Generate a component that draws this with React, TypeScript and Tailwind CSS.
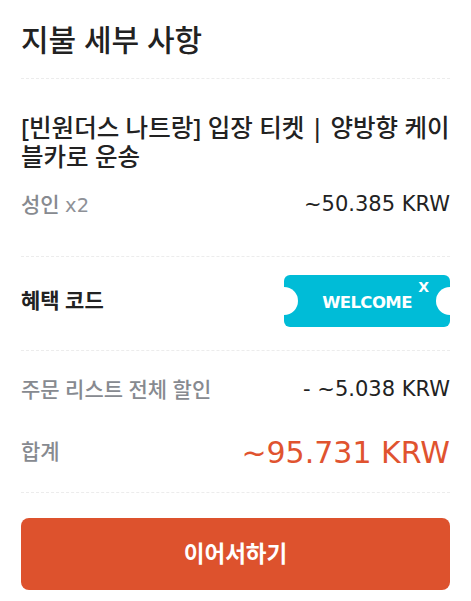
export default function App() {
  const font = { fontFamily: '"Noto Sans", "Noto Sans CJK KR", sans-serif' };
  const num = { fontFamily: '"DejaVu Sans", "Noto Sans CJK KR", sans-serif' };

  return (
    <div className="w-[471px] h-[601px] bg-white px-[21px] text-[#222]" style={font}>
      {/* Title */}
      <h2 className="pt-[22px] text-[30px] leading-[36px] font-medium text-[#222]">지불 세부 사항</h2>
      <div className="mt-[20px] border-t border-dashed border-[#ececec]" />

      {/* Product */}
      <p className="mt-[34px] text-[24.5px] leading-[29px] font-medium text-[#222]">
        [빈원더스 나트랑] 입장 티켓 | 양방향 케이블카로 운송
      </p>
      <div className="mt-[22px] flex items-center justify-between h-[24px]">
        <span className="text-[21px] font-medium text-[#878a90]">
          성인 <span className="font-normal text-[19.5px] text-[#8e9197]" style={num}>x2</span>
        </span>
        <span className="text-[21px] text-[#222]" style={num}>~50.385 KRW</span>
      </div>
      <div className="mt-[39px] border-t border-dashed border-[#ececec]" />

      {/* Coupon */}
      <div className="mt-[18px] flex items-center justify-between h-[52px]">
        <span className="text-[21px] font-bold text-[#222]">혜택 코드</span>
        <div className="relative w-[166px] h-[52px] rounded-[6px] bg-[#00bcd7] overflow-hidden flex items-center justify-center">
          <span className="absolute left-[-14px] top-[12px] w-[28px] h-[28px] rounded-full bg-white" />
          <span className="absolute right-[-14px] top-[12px] w-[28px] h-[28px] rounded-full bg-white" />
          <span className="mt-[4px] text-[16.5px] font-bold text-white tracking-[-0.6px]" style={num}>WELCOME</span>
          <span className="absolute right-[21px] top-[2px] text-[14px] font-bold text-white" style={num}>X</span>
        </div>
      </div>
      <div className="mt-[23px] border-t border-dashed border-[#ececec]" />

      {/* Discount */}
      <div className="mt-[27px] flex items-center justify-between h-[24px]">
        <span className="text-[21px] font-medium text-[#878a90]">주문 리스트 전체 할인</span>
        <span className="text-[21px] text-[#222]" style={num}>- ~5.038 KRW</span>
      </div>

      {/* Total */}
      <div className="mt-[30px] flex items-center justify-between h-[40px]">
        <span className="text-[21px] font-medium text-[#878a90]">합계</span>
        <span className="text-[30px] text-[#e0532f]" style={num}>~95.731 KRW</span>
      </div>
      <div className="mt-[20px] border-t border-dashed border-[#ececec]" />

      {/* Button */}
      <button className="mt-[25px] w-full h-[72px] rounded-[8px] bg-[#dd522d] text-white text-[22.5px] font-bold">
        이어서하기
      </button>
    </div>
  );
}
